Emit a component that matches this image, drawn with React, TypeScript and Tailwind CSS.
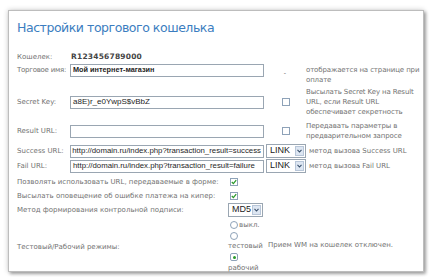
const lbl = "font-['DejaVu_Sans',sans-serif] text-[7px] leading-[10px] text-[#727272]";
const desc = `w-[116px] tracking-[-0.12px] ${lbl}`;
const inp =
  "flex h-[13px] w-[194px] items-center overflow-hidden whitespace-nowrap border border-[#9aa6b2] bg-white px-[2px] font-['Liberation_Sans',sans-serif] text-[#1e1e1e]";

function Box({ checked }: { checked?: boolean }) {
  return (
    <span className="flex h-[8px] w-[8px] items-center justify-center border border-[#8ea2b8] bg-white">
      {checked && (
        <svg width="6" height="6" viewBox="0 0 6 6">
          <path d="M0.8 3 L2.4 4.6 L5.2 1.2" fill="none" stroke="#2a9a2a" strokeWidth="1.3" />
        </svg>
      )}
    </span>
  );
}

function Radio({ checked }: { checked?: boolean }) {
  return checked ? (
    <span className="flex h-[8px] w-[8px] items-center justify-center rounded-[2px] border border-[#8ea2b8] bg-white">
      <span className="h-[3px] w-[3px] rounded-full bg-[#2a9a2a]" />
    </span>
  ) : (
    <span className="h-[8px] w-[8px] rounded-full border border-[#8ea2b8] bg-white" />
  );
}

function Select({ value, w }: { value: string; w: string }) {
  return (
    <div className={`flex h-[14px] items-center justify-between border border-[#9aa6b2] bg-white pl-[3px] pr-[1px] ${w}`}>
      <span className="font-['Liberation_Sans',sans-serif] text-[9px] text-[#222]">{value}</span>
      <span className="flex h-[10px] w-[9px] items-center justify-center border border-[#b8c6d8] bg-[#dde6f2]">
        <svg width="5" height="4" viewBox="0 0 5 4">
          <path d="M0.5 0.8 L2.5 3 L4.5 0.8" fill="none" stroke="#39506b" strokeWidth="1.1" />
        </svg>
      </span>
    </div>
  );
}

export default function App() {
  return (
    <div className="h-[280px] w-[434px] overflow-hidden bg-white pl-[8px] pt-[10px]">
      <div className="h-[262px] w-[416px] border border-[#bdbdbd] bg-white pl-[8px] shadow-[0_0_5px_rgba(0,0,0,0.22),2px_2px_3px_rgba(0,0,0,0.3)]">
        <h1 className="mt-[8px] font-['DejaVu_Sans',sans-serif] text-[12.5px] leading-[18px] tracking-[-0.45px] text-[#3b7dc0]">
          Настройки торгового кошелька
        </h1>

        <div className="mt-[13px] flex h-[14px] items-center">
          <span className={`w-[54px] ${lbl}`}>Кошелек:</span>
          <span className="font-['DejaVu_Sans',sans-serif] text-[7.5px] font-bold tracking-[0.2px] text-[#444]">
            R123456789000
          </span>
        </div>

        <div className="flex h-[22px] items-start">
          <span className={`w-[53px] whitespace-nowrap pt-[1px] tracking-[-0.25px] ${lbl}`}>Торговое имя:</span>
          <div className={`${inp} text-[7.3px]`}>
            <span className="font-bold">Мой интернет-магазин</span>
          </div>
          <span className="w-[42px] pt-[4px] text-center text-[7px] leading-[10px] text-[#777]">-</span>
          <div className={`pt-[1px] ${desc}`}>отображается на странице при оплате</div>
        </div>

        <div className="mt-[1px] flex h-[30px] items-center">
          <span className={`w-[53px] ${lbl}`}>Secret Key:</span>
          <div className={`${inp} text-[8px]`}>a8E)r_e0YwpS$vBbZ</div>
          <span className="flex w-[42px] justify-center pl-[2px]">
            <Box />
          </span>
          <div className={desc}>Высылать Secret Key на Result URL, если Result URL обеспечивает секретность</div>
        </div>

        <div className="mt-[4px] flex h-[20px] items-center">
          <span className={`w-[53px] ${lbl}`}>Result URL:</span>
          <div className={inp} />
          <span className="flex w-[42px] justify-center pl-[2px]">
            <Box />
          </span>
          <div className={desc}>Передавать параметры в предварительном запросе</div>
        </div>

        <div className="mt-[3px] flex h-[14px] items-center">
          <span className={`w-[53px] ${lbl}`}>Success URL:</span>
          <div className={`${inp} justify-end text-[7.8px]`}>http://domain.ru/index.php?transaction_result=success</div>
          <span className="ml-[2px]">
            <Select value="LINK" w="w-[40px]" />
          </span>
          <span className={`ml-[3px] ${lbl}`}>метод вызова Success URL</span>
        </div>

        <div className="mt-[1px] flex h-[14px] items-center">
          <span className={`w-[53px] ${lbl}`}>Fail URL:</span>
          <div className={`${inp} text-[7.8px]`}>http://domain.ru/index.php?transaction_result=failure</div>
          <span className="ml-[2px]">
            <Select value="LINK" w="w-[40px]" />
          </span>
          <span className={`ml-[3px] ${lbl}`}>метод вызова Fail URL</span>
        </div>

        <div className="mt-[3px] flex h-[12px] items-center">
          <span className={`w-[213px] ${lbl}`}>Позволять использовать URL, передаваемые в форме:</span>
          <Box checked />
        </div>

        <div className="mt-[2px] flex h-[12px] items-center">
          <span className={`w-[213px] ${lbl}`}>Высылать оповещение об ошибке платежа на кипер:</span>
          <Box checked />
        </div>

        <div className="mt-[1px] flex h-[14px] items-center">
          <span className={`w-[211px] ${lbl}`}>Метод формирования контрольной подписи:</span>
          <Select value="MD5" w="w-[35px]" />
        </div>

        <div className="mt-[2px] flex items-start">
          <span className={`mt-[23px] w-[211px] ${lbl}`}>Тестовый/Рабочий режимы:</span>
          <div className="flex w-[36px] flex-col">
            <div className="flex h-[11px] items-center pl-[2px]">
              <Radio />
              <span className={`ml-[1px] ${lbl}`}>выкл.</span>
            </div>
            <div className="flex h-[11px] items-center pl-[2px]">
              <Radio />
            </div>
            <div className={`h-[10px] ${lbl}`}>тестовый</div>
            <div className="flex h-[12px] items-center pl-[2px]">
              <Radio checked />
            </div>
            <div className={`h-[10px] ${lbl}`}>рабочий</div>
          </div>
          <span className={`ml-[4px] mt-[21px] ${lbl}`}>Прием WM на кошелек отключен.</span>
        </div>
      </div>
    </div>
  );
}
